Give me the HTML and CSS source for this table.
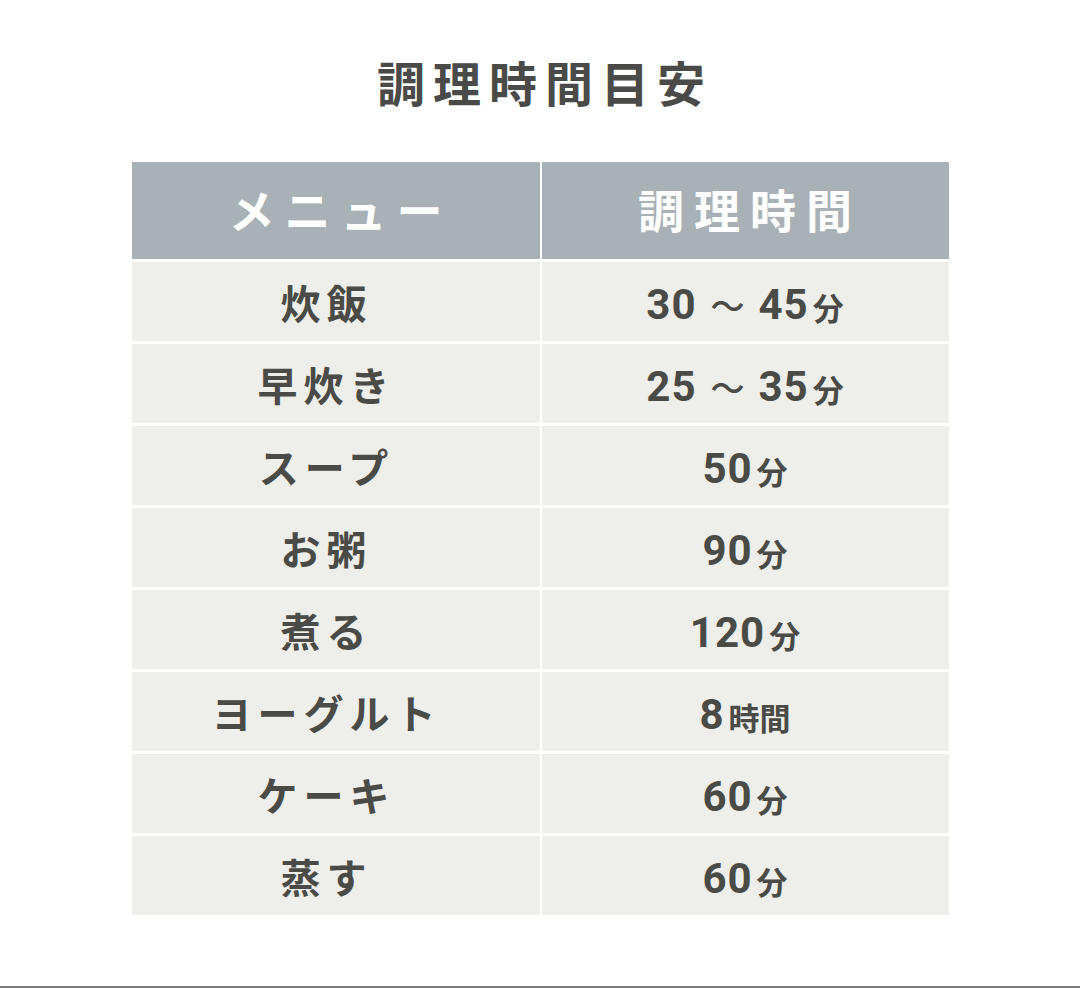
FILE: index.html
```html
<!DOCTYPE html>
<html lang="ja">
<head>
<meta charset="utf-8">
<link rel="stylesheet" href="styles.css">
</head>
<body>
<div class="page">
  <h1 class="title">調理時間目安</h1>
  <div class="table">
    <div class="cell head">メニュー</div>
    <div class="cell head">調理時間</div>

    <div class="cell menu">炊飯</div>
    <div class="cell time"><span class="num">30</span><span class="tilde">〜</span><span class="num">45</span><span class="unit">分</span></div>

    <div class="cell menu">早炊き</div>
    <div class="cell time"><span class="num">25</span><span class="tilde">〜</span><span class="num">35</span><span class="unit">分</span></div>

    <div class="cell menu">スープ</div>
    <div class="cell time"><span class="num">50</span><span class="unit">分</span></div>

    <div class="cell menu">お粥</div>
    <div class="cell time"><span class="num">90</span><span class="unit">分</span></div>

    <div class="cell menu">煮る</div>
    <div class="cell time"><span class="num">120</span><span class="unit">分</span></div>

    <div class="cell menu">ヨーグルト</div>
    <div class="cell time"><span class="num">8</span><span class="unit">時間</span></div>

    <div class="cell menu">ケーキ</div>
    <div class="cell time"><span class="num">60</span><span class="unit">分</span></div>

    <div class="cell menu">蒸す</div>
    <div class="cell time"><span class="num">60</span><span class="unit">分</span></div>
  </div>
</div>
<div class="bottom-line"></div>
</body>
</html>
```

FILE: styles.css
```css
html, body {
  margin: 0;
  padding: 0;
  background: #ffffff;
}
body {
  width: 1080px;
  height: 988px;
  position: relative;
  overflow: hidden;
  font-family: "Noto Sans CJK JP", "Noto Sans", sans-serif;
  color: #4a4a47;
}
.page {
  display: flex;
  flex-direction: column;
  align-items: center;
}
.title {
  margin: 49px 0 0 0;
  height: 113px;
  line-height: 64px;
  font-size: 48px;
  font-weight: 700;
  letter-spacing: 8px;
  padding-left: 10px;
  color: #4a4a48;
}
.table {
  display: grid;
  grid-template-columns: 408px 407px;
  grid-template-rows: 97px repeat(8, 79px);
  column-gap: 2px;
  row-gap: 3px;
  width: 817px;
}
.cell {
  display: flex;
  align-items: center;
  justify-content: center;
  background: #eeeeea;
  font-weight: 700;
}
.head {
  background: #a8b1b5;
  color: #ffffff;
  font-size: 46px;
  letter-spacing: 10px;
  padding-left: 10px;
  padding-bottom: 6px;
  box-sizing: border-box;
}
.menu {
  font-size: 40px;
  letter-spacing: 6px;
  padding-right: 18px;
  box-sizing: border-box;
}
.time {
  padding-top: 5px;
  box-sizing: border-box;
}
.num {
  font-family: "Roboto", "Liberation Sans", sans-serif;
  font-size: 42px;
  font-weight: 700;
  letter-spacing: 1px;
}
.tilde {
  font-size: 34px;
  margin: 0 14px;
  font-weight: 500;
}
.unit {
  font-size: 31px;
  margin-left: 4px;
  padding-top: 4px;
}
.bottom-line {
  position: absolute;
  left: 0;
  right: 0;
  bottom: 0;
  height: 2px;
  background: #7b7b7b;
}
```
